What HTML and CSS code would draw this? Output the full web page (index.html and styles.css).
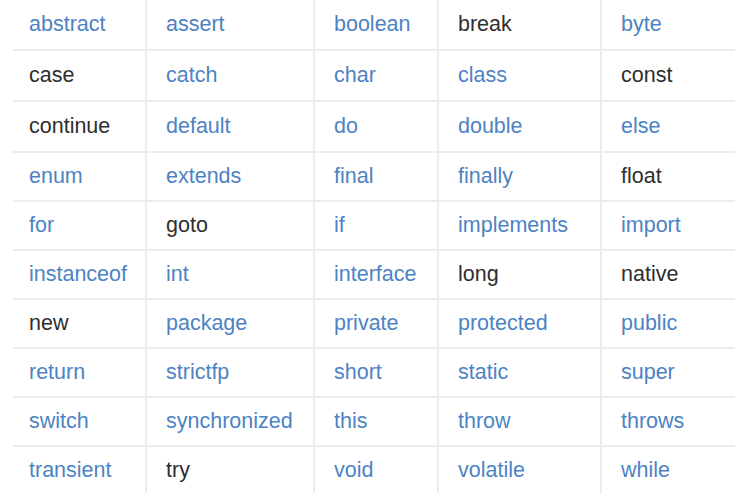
FILE: index.html
```html
<!DOCTYPE html>
<html>
<head>
<meta charset="utf-8">
<link rel="stylesheet" href="styles.css">
</head>
<body>
<div class="kw">
  <span class="c b">abstract</span><span class="c b">assert</span><span class="c b">boolean</span><span class="c d">break</span><span class="c b">byte</span>
  <span class="c d">case</span><span class="c b">catch</span><span class="c b">char</span><span class="c b">class</span><span class="c d">const</span>
  <span class="c d">continue</span><span class="c b">default</span><span class="c b">do</span><span class="c b">double</span><span class="c b">else</span>
  <span class="c b">enum</span><span class="c b">extends</span><span class="c b">final</span><span class="c b">finally</span><span class="c d">float</span>
  <span class="c b">for</span><span class="c d">goto</span><span class="c b">if</span><span class="c b">implements</span><span class="c b">import</span>
  <span class="c b">instanceof</span><span class="c b">int</span><span class="c b">interface</span><span class="c d">long</span><span class="c d">native</span>
  <span class="c d">new</span><span class="c b">package</span><span class="c b">private</span><span class="c b">protected</span><span class="c b">public</span>
  <span class="c b">return</span><span class="c b">strictfp</span><span class="c b">short</span><span class="c b">static</span><span class="c b">super</span>
  <span class="c b">switch</span><span class="c b">synchronized</span><span class="c b">this</span><span class="c b">throw</span><span class="c b">throws</span>
  <span class="c b last">transient</span><span class="c d last">try</span><span class="c b last">void</span><span class="c b last">volatile</span><span class="c b last">while</span>
</div>
</body>
</html>
```
FILE: styles.css
```css
html, body {
  margin: 0;
  padding: 0;
  background: #ffffff;
}
body {
  font-family: "Liberation Sans", Arial, sans-serif;
  font-size: 21.5px;
}
.kw {
  margin-left: 13px;
  width: 722px;
  display: grid;
  grid-template-columns: 132px 168px 124px 163px 135px;
  grid-template-rows: 51px 51px 51px 49px 49px 49px 49px 49px 49px 46px;
}
.c {
  box-sizing: border-box;
  display: flex;
  align-items: center;
  padding-left: 19px;
  border-bottom: 2px solid #ececec;
  border-left: 2px solid #ececec;
  white-space: nowrap;
}
.c:nth-child(5n+1) {
  border-left: none;
  padding-left: 16px;
}
.c.last {
  border-bottom: none;
}
.b {
  color: #4d83c4;
}
.d {
  color: #2e2e2e;
}
```
